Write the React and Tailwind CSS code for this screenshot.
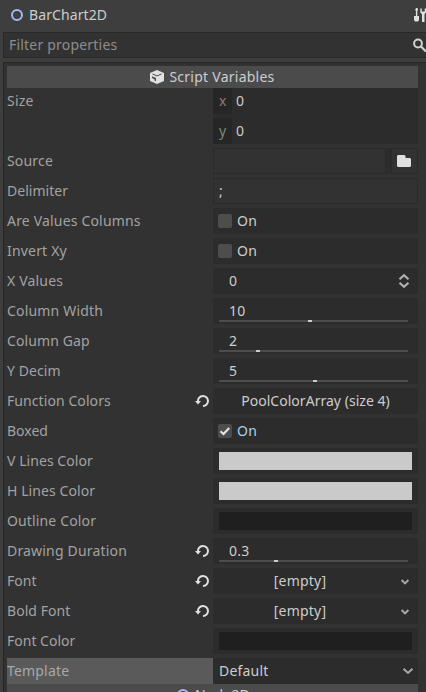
import React from "react";

function ResetIcon() {
  return (
    <svg width="14" height="14" viewBox="0 0 14 14" className="mr-[4px] shrink-0">
      <path d="M3 7.400A5 5 0 1 1 8 12" fill="none" stroke="#e0e0e0" strokeWidth="2" />
      <path d="M0 7h6L3 10.400z" fill="#e0e0e0" />
    </svg>
  );
}

function Row({ label, tracking = "tracking-[0.18px]", reset, active, children }) {
  return (
    <div className="flex h-[26px] shrink-0">
      <div className={`flex w-[206px] items-center justify-between ${active ? "bg-[#5a5a5a] text-[#a8a8a8]" : "text-[#a2a2a2]"}`}>
        <span className={tracking}>{label}</span>
        {reset && <ResetIcon />}
      </div>
      <div className="flex w-[205px] items-center bg-[#2c2c2c]">{children}</div>
    </div>
  );
}

function Check({ on }) {
  return (
    <div className="flex items-center pl-[5px]">
      <div className="h-[14px] w-[14px] rounded-[2px] bg-[#4d4d4d]">
        {on && (
          <svg width="14" height="14" viewBox="0 0 14 14">
            <path d="M2.500 7.300l3 2.700 5.700-5.900" fill="none" stroke="#e3e3e3" strokeWidth="2.200" />
          </svg>
        )}
      </div>
      <span className={`ml-[5px] ${on ? "text-[#a6d3ea]" : "text-[#cdcdcd]"}`}>On</span>
    </div>
  );
}

function Slider({ value, pos }) {
  return (
    <div className="flex h-full w-full flex-col pl-[6px]">
      <span className="h-[22px] pl-[10px] leading-[26px]">{value}</span>
      <div className="h-[2px] w-[189px] bg-[#4d4d4d]">
        <div className="h-[2px] w-[4px] bg-[#cccccc]" style={{ marginLeft: pos }} />
      </div>
    </div>
  );
}

function Swatch({ light }) {
  return <div className={`ml-[6px] h-[18px] w-[193px] ${light ? "bg-[#cacaca]" : "bg-[#1f1f1f]"}`} />;
}

function Empty() {
  return (
    <>
      <span className="w-[174px] text-center tracking-[0.2px]">[empty]</span>
      <svg width="10" height="8" viewBox="0 0 10 8" className="ml-[13px] mt-[2px]">
        <path d="M1.600 2L5 5.400 8.400 2" fill="none" stroke="#a8a8a8" strokeWidth="2" />
      </svg>
    </>
  );
}

function Axis({ name, color }) {
  return (
    <div className="flex h-[26px]">
      <div className={`w-[19px] bg-[#262626] pl-[6px] leading-[26px] ${color}`}>{name}</div>
      <span className="pl-[4px] leading-[26px]">0</span>
    </div>
  );
}

export default function App() {
  return (
    <div className="flex h-[692px] w-[426px] flex-col overflow-hidden bg-[#3e3e3e] font-['Noto_Sans',sans-serif] text-[14px] leading-[26px] tracking-[0.2px] whitespace-nowrap text-[#cdcdcd]">
      <div className="flex h-[32px] shrink-0 items-center pb-[2px] pl-[11px]">
        <svg width="12" height="12" viewBox="0 0 12 12">
          <circle cx="6" cy="6" r="5" fill="none" stroke="#a5b7f3" strokeWidth="2" />
        </svg>
        <span className="ml-[6px] tracking-[0.1px]">BarChart2D</span>
        <svg width="12" height="16" viewBox="0 0 12 16" className="ml-auto shrink-0">
          <path d="M2 1h1.500L4 3l-.700 1v5H5v4l-1 1.500H1L0 13V9h1.900V4l-.700-1z" fill="#e0e0e0" />
          <path d="M6.300 1.500v4L8 7.200V15h2.500V7.200L12 5.500v-4h-1.300v3H7.800v-3z" fill="#e0e0e0" />
        </svg>
      </div>
      <div className="ml-[3px] flex h-[26px] shrink-0 items-center border border-r-0 border-[#292929] bg-[#323232] pl-[5px] text-[#8d8d8d]">
        <span>Filter properties</span>
        <svg width="13" height="14" viewBox="0 0 13 14" className="ml-auto shrink-0">
          <circle cx="5" cy="5.500" r="3.900" fill="none" stroke="#d2d2d2" strokeWidth="2" />
          <path d="M7.800 8.300L13 13.500" stroke="#d2d2d2" strokeWidth="2.200" />
        </svg>
      </div>
      <div className="mt-[4px] ml-[3px] flex h-[630px] flex-col overflow-hidden border border-r-0 border-b-0 border-[#262626] bg-[#323232] pt-[3px] pl-[3px]">
        <div className="flex h-[22px] w-[411px] shrink-0 items-center justify-center bg-[#4b4b4b]">
          <svg width="14" height="14" viewBox="0 0 14 14">
            <path d="M7 0l7 3v8l-7 3-7-3V3z" fill="#e0e0e0" />
            <path d="M2.500 4L7 5.900 11.500 4" fill="none" stroke="#4b4b4b" strokeWidth="1" />
            <path d="M2 6.300l4 1.800v3.200L4.500 10.600V9.200L2 8.100z" fill="#4b4b4b" />
          </svg>
          <span className="ml-[5px] tracking-[0.25px]">Script Variables</span>
        </div>
        <div className="flex h-[56px] shrink-0">
          <div className="w-[206px] text-[#a2a2a2]">Size</div>
          <div className="flex w-[205px] flex-col gap-[4px] bg-[#2c2c2c]">
            <Axis name="x" color="text-[#8c7a73]" />
            <Axis name="y" color="text-[#748c7c]" />
          </div>
        </div>
        <div className="mt-[4px] flex flex-col gap-[4px]">
          <Row label="Source">
            <div className="h-[26px] w-[173px] border border-[#2a2a2a] bg-[#323232]" />
            <div className="ml-[5px] flex h-[26px] w-[27px] items-center border border-[#2a2a2a] bg-[#323232] pl-[5px]">
              <svg width="14" height="12" viewBox="0 0 14 12">
                <path d="M1 0h6.500L8.500 1V3H13l1 1v7l-1 1H1l-1-1V1z" fill="#e0e0e0" />
              </svg>
            </div>
          </Row>
          <Row label="Delimiter" tracking="tracking-[0.03px]">
            <div className="h-[26px] w-[205px] border border-[#2a2a2a] bg-[#323232] pl-[5px] leading-[24px]">;</div>
          </Row>
          <Row label="Are Values Columns"><Check /></Row>
          <Row label="Invert Xy"><Check /></Row>
          <Row label="X Values">
            <span className="pl-[16px]">0</span>
            <svg width="12" height="16" viewBox="0 0 12 16" className="mr-[8px] ml-auto">
              <path d="M1.500 6.300L6 2.200l4.500 4.100M1.500 9.700L6 13.800l4.500-4.100" fill="none" stroke="#b0b0b0" strokeWidth="2.200" />
            </svg>
          </Row>
          <Row label="Column Width"><Slider value="10" pos="89px" /></Row>
          <Row label="Column Gap" tracking="tracking-[0.12px]"><Slider value="2" pos="37px" /></Row>
          <Row label="Y Decim" tracking="tracking-[0.08px]"><Slider value="5" pos="94px" /></Row>
          <Row label="Function Colors" tracking="tracking-[0.08px]" reset>
            <span className="w-full text-center tracking-[0.03px]">PoolColorArray (size 4)</span>
          </Row>
          <Row label="Boxed" tracking="tracking-[0px]"><Check on /></Row>
          <Row label="V Lines Color" tracking="tracking-[0.06px]"><Swatch light /></Row>
          <Row label="H Lines Color" tracking="tracking-[0.08px]"><Swatch light /></Row>
          <Row label="Outline Color" tracking="tracking-[0.14px]"><Swatch /></Row>
          <Row label="Drawing Duration" reset><Slider value="0.3" pos="55px" /></Row>
          <Row label="Font" tracking="tracking-[0.05px]" reset><Empty /></Row>
          <Row label="Bold Font" tracking="tracking-[0.05px]" reset><Empty /></Row>
          <Row label="Font Color" tracking="tracking-[0px]"><Swatch /></Row>
          <Row label="Template" active>
            <span className="pl-[6px]">Default</span>
            <svg width="12" height="8" viewBox="0 0 12 8" className="mr-[4px] ml-auto">
              <path d="M1.500 1.800L6 6l4.500-4.200" fill="none" stroke="#a8a8a8" strokeWidth="2" />
            </svg>
          </Row>
        </div>
        <div className="flex h-[22px] w-[411px] shrink-0 items-center justify-center bg-[#4b4b4b] pl-[2px]">
          <svg width="12" height="12" viewBox="0 0 12 12">
            <circle cx="6" cy="6" r="5" fill="none" stroke="#a5b7f3" strokeWidth="2" />
          </svg>
          <span className="ml-[6px]">Node2D</span>
        </div>
      </div>
    </div>
  );
}
